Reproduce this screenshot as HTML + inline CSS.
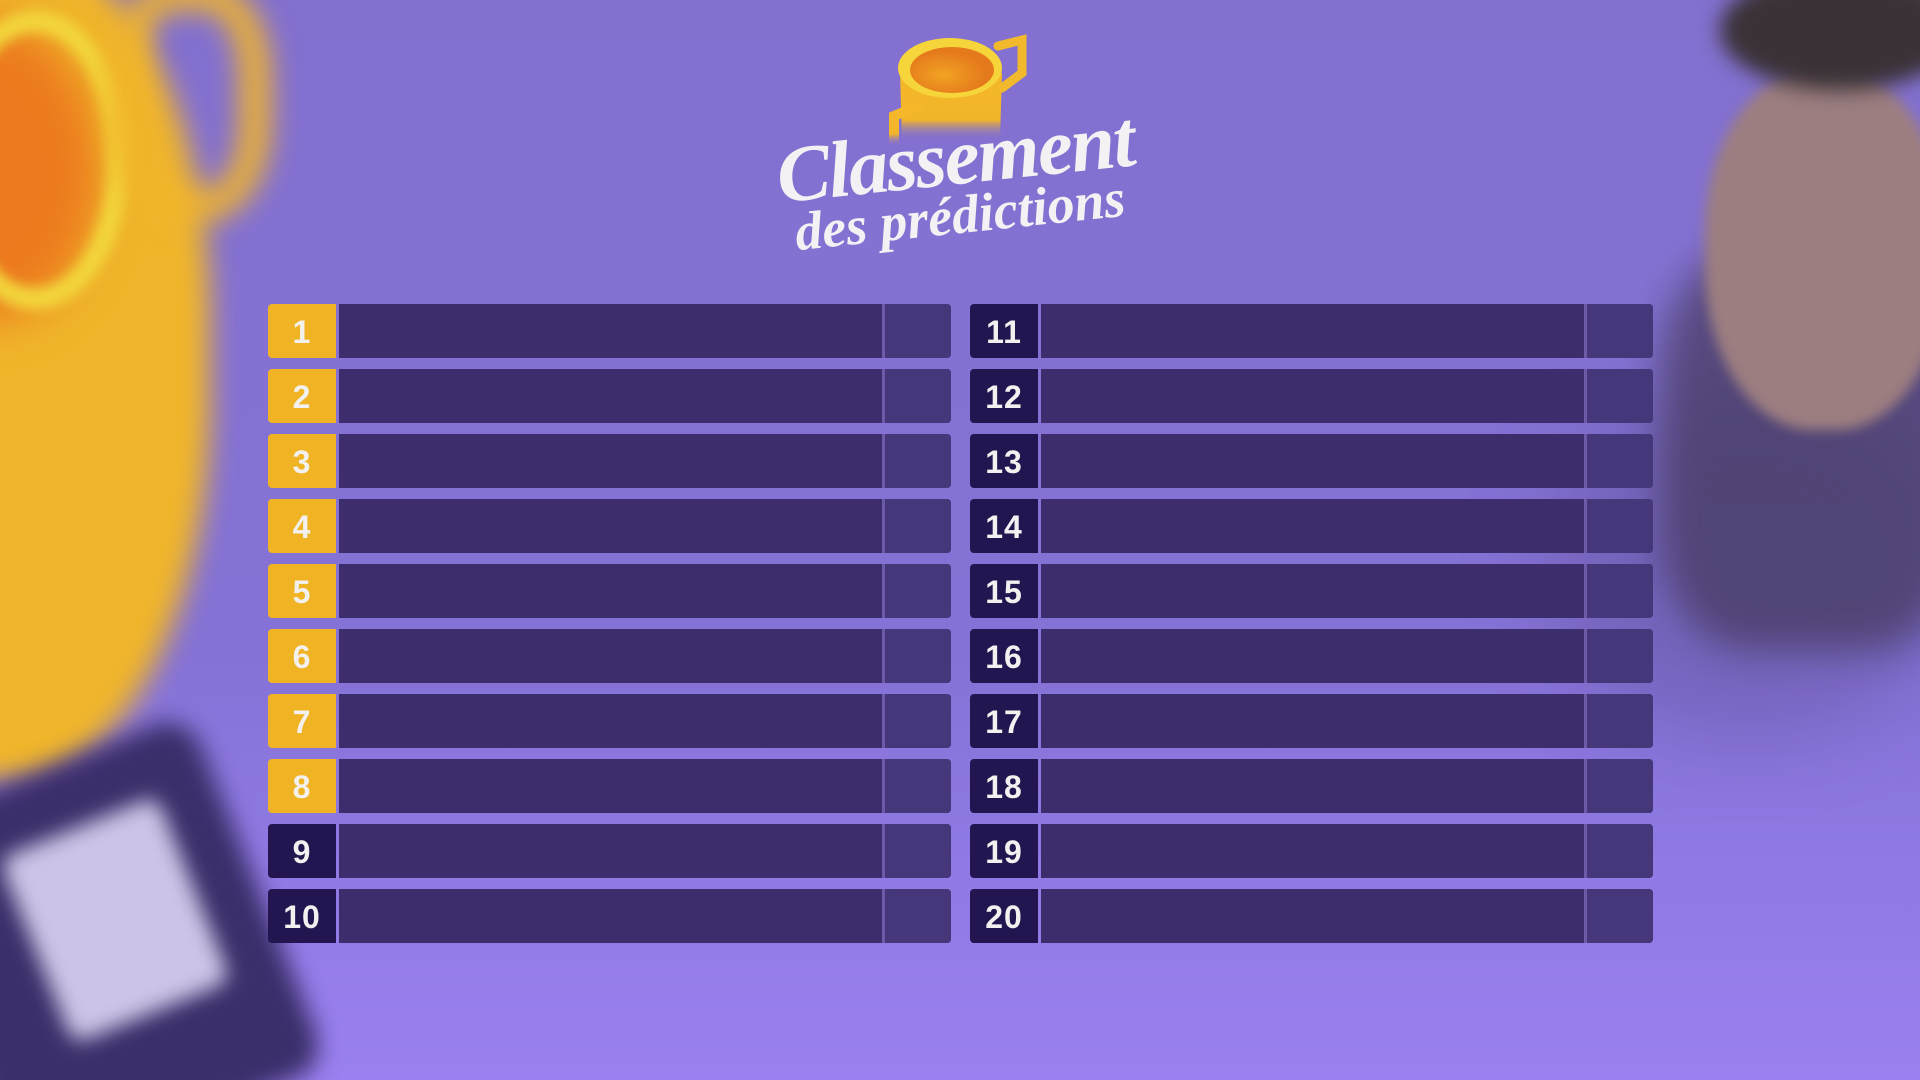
<!DOCTYPE html>
<html><head><meta charset="utf-8"><style>
*{margin:0;padding:0;box-sizing:border-box}
html,body{width:1920px;height:1080px;overflow:hidden}
#w{position:relative;width:1920px;height:1080px;overflow:hidden;font-family:"Liberation Sans",sans-serif;
background:linear-gradient(180deg,#8370cf 0%,#8572d6 60%,#9a80f0 100%);}
.blob{position:absolute;border-radius:50%;filter:blur(18px)}
.row{position:absolute;height:54px}
.num{position:absolute;left:0;top:0;width:68px;height:54px;border-radius:4px 0 0 4px;color:#f3f0f0;font-weight:900;font-size:32px;text-align:center;line-height:56px;letter-spacing:1px}
.bar{position:absolute;left:71px;top:0;width:612px;height:54px;background:#3d2d6d;border-radius:0 4px 4px 0}
.bar:before{content:"";position:absolute;left:543px;top:0;width:3px;height:54px;background:#6d5aa8}
.bar:after{content:"";position:absolute;left:546px;top:0;right:0;height:54px;background:#46367a;border-radius:0 4px 4px 0}
.y{background:#f0b323}.d{background:#231650}
</style></head><body><div id="w">
<!-- left blurred cup -->
<div class="blob" style="left:-230px;top:-60px;width:440px;height:840px;background:#f0b52a;border-radius:45%;filter:blur(14px)"></div>
<div class="blob" style="left:-120px;top:20px;width:220px;height:300px;background:#ec7a1e;filter:blur(22px)"></div>
<div class="blob" style="left:-60px;top:10px;width:190px;height:300px;border:22px solid #f2d53c;background:transparent;filter:blur(6px)"></div>
<div class="blob" style="left:110px;top:-20px;width:160px;height:240px;border:30px solid #f1b52a;background:transparent;border-radius:40%;filter:blur(14px)"></div>
<div class="blob" style="left:-60px;top:760px;width:330px;height:380px;background:#3b2e6a;border-radius:10%;transform:rotate(-22deg);filter:blur(12px)"></div>
<div class="blob" style="left:30px;top:820px;width:170px;height:200px;background:#cbc4e6;border-radius:8%;transform:rotate(-22deg);filter:blur(10px)"></div>
<!-- right person -->
<div class="blob" style="left:1540px;top:380px;width:420px;height:360px;background:#5a4a8e;opacity:.35;filter:blur(40px)"></div>
<div class="blob" style="left:1660px;top:250px;width:300px;height:400px;background:#3a3048;border-radius:30%;opacity:.6;filter:blur(20px)"></div>
<div class="blob" style="left:1705px;top:70px;width:240px;height:360px;background:#9c7e80;border-radius:45%;filter:blur(6px)"></div>
<div class="blob" style="left:1720px;top:-30px;width:240px;height:120px;background:#3a3236;filter:blur(10px)"></div>
<!-- cup -->
<svg style="position:absolute;left:880px;top:28px" width="160" height="125" viewBox="0 0 160 125">
<defs><linearGradient id="g" x1="0" y1="0" x2="0" y2="1"><stop offset="0" stop-color="#f5b82a"/><stop offset=".7" stop-color="#f2b52a"/><stop offset="1" stop-color="#8470cf" stop-opacity="0"/></linearGradient>
<radialGradient id="o" cx=".4" cy=".6"><stop offset="0" stop-color="#f1a323"/><stop offset="1" stop-color="#e57a1c"/></radialGradient></defs>
<path d="M20 45 L22 112 L120 112 L122 45 Z" fill="url(#g)"/>
<path d="M14 118 L14 88 L38 78" stroke="url(#g)" stroke-width="10" fill="none" stroke-linecap="round"/>
<path d="M118 18 L142 12 L142 45 L122 60" stroke="#f2b92c" stroke-width="9" fill="none" stroke-linecap="round"/>
<ellipse cx="70" cy="40" rx="52" ry="30" fill="#f6d53a"/>
<ellipse cx="72" cy="42" rx="42" ry="23" fill="url(#o)"/>
</svg>
<!-- title -->
<div style="position:absolute;left:755px;top:118px;width:400px;text-align:center;transform:rotate(-6deg);color:#f3f1f3;font-family:'Liberation Serif',serif;font-style:italic;font-weight:700;font-size:80px;line-height:80px;letter-spacing:-2px">Classement</div>
<div style="position:absolute;left:770px;top:188px;width:380px;text-align:center;transform:rotate(-6deg);color:#f3f1f3;font-family:'Liberation Serif',serif;font-style:italic;font-weight:700;font-size:54px;line-height:54px">des prédictions</div>

<div class="row" style="left:268px;top:304px"><div class="num y">1</div><div class="bar"></div></div>
<div class="row" style="left:268px;top:369px"><div class="num y">2</div><div class="bar"></div></div>
<div class="row" style="left:268px;top:434px"><div class="num y">3</div><div class="bar"></div></div>
<div class="row" style="left:268px;top:499px"><div class="num y">4</div><div class="bar"></div></div>
<div class="row" style="left:268px;top:564px"><div class="num y">5</div><div class="bar"></div></div>
<div class="row" style="left:268px;top:629px"><div class="num y">6</div><div class="bar"></div></div>
<div class="row" style="left:268px;top:694px"><div class="num y">7</div><div class="bar"></div></div>
<div class="row" style="left:268px;top:759px"><div class="num y">8</div><div class="bar"></div></div>
<div class="row" style="left:268px;top:824px"><div class="num d">9</div><div class="bar"></div></div>
<div class="row" style="left:268px;top:889px"><div class="num d">10</div><div class="bar"></div></div>

<div class="row" style="left:970px;top:304px"><div class="num d">11</div><div class="bar"></div></div>
<div class="row" style="left:970px;top:369px"><div class="num d">12</div><div class="bar"></div></div>
<div class="row" style="left:970px;top:434px"><div class="num d">13</div><div class="bar"></div></div>
<div class="row" style="left:970px;top:499px"><div class="num d">14</div><div class="bar"></div></div>
<div class="row" style="left:970px;top:564px"><div class="num d">15</div><div class="bar"></div></div>
<div class="row" style="left:970px;top:629px"><div class="num d">16</div><div class="bar"></div></div>
<div class="row" style="left:970px;top:694px"><div class="num d">17</div><div class="bar"></div></div>
<div class="row" style="left:970px;top:759px"><div class="num d">18</div><div class="bar"></div></div>
<div class="row" style="left:970px;top:824px"><div class="num d">19</div><div class="bar"></div></div>
<div class="row" style="left:970px;top:889px"><div class="num d">20</div><div class="bar"></div></div>
</div></body></html>
